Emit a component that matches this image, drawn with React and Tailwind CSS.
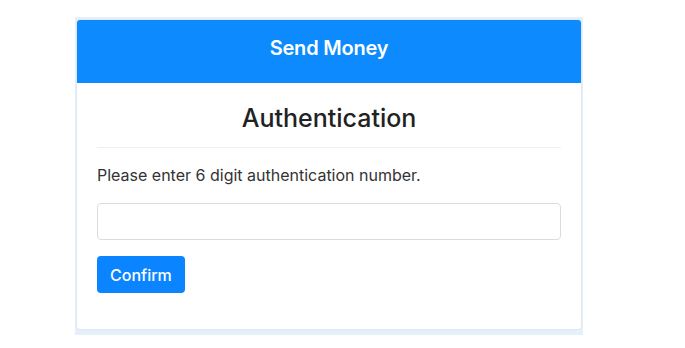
import React, { useState } from "react";

function App() {
  const [code, setCode] = useState("");

  return (
    <div
      className="min-h-[348px] bg-white pt-[17px] pl-[75px]"
      style={{ fontFamily: "Inter, 'Noto Sans', sans-serif" }}
    >
      <div className="w-[508px] bg-[#e6f0fa] px-[2px] pt-[3px] pb-[6px]">
        <div className="bg-white rounded-[3px] overflow-hidden shadow-[0_0_2px_rgba(0,0,0,0.12)]">
          <div className="h-[63px] bg-[#0d8bfe] flex items-center justify-center pb-[8px]">
            <h2 className="text-white text-[20px] font-semibold tracking-[-0.2px]">
              Send Money
            </h2>
          </div>
          <div className="px-[20px] pt-[18px] pb-[36px]">
            <h1 className="text-center text-[25px] leading-[34px] font-medium text-[#222] pb-[12px] border-b border-[#f0f0f0]">
              Authentication
            </h1>
            <p className="mt-[15px] text-[16px] leading-[24px] text-[#333]">
              Please enter 6 digit authentication number.
            </p>
            <input
              value={code}
              onChange={(e) => setCode(e.target.value)}
              className="mt-[16px] block w-full h-[37px] rounded-[4px] border border-[#dcdcdc] px-3 outline-none"
            />
            <button className="mt-[16px] h-[37px] px-[13px] rounded-[4px] bg-[#0a84ff] text-white text-[16px] font-medium">
              Confirm
            </button>
          </div>
        </div>
      </div>
    </div>
  );
}

export default App;
